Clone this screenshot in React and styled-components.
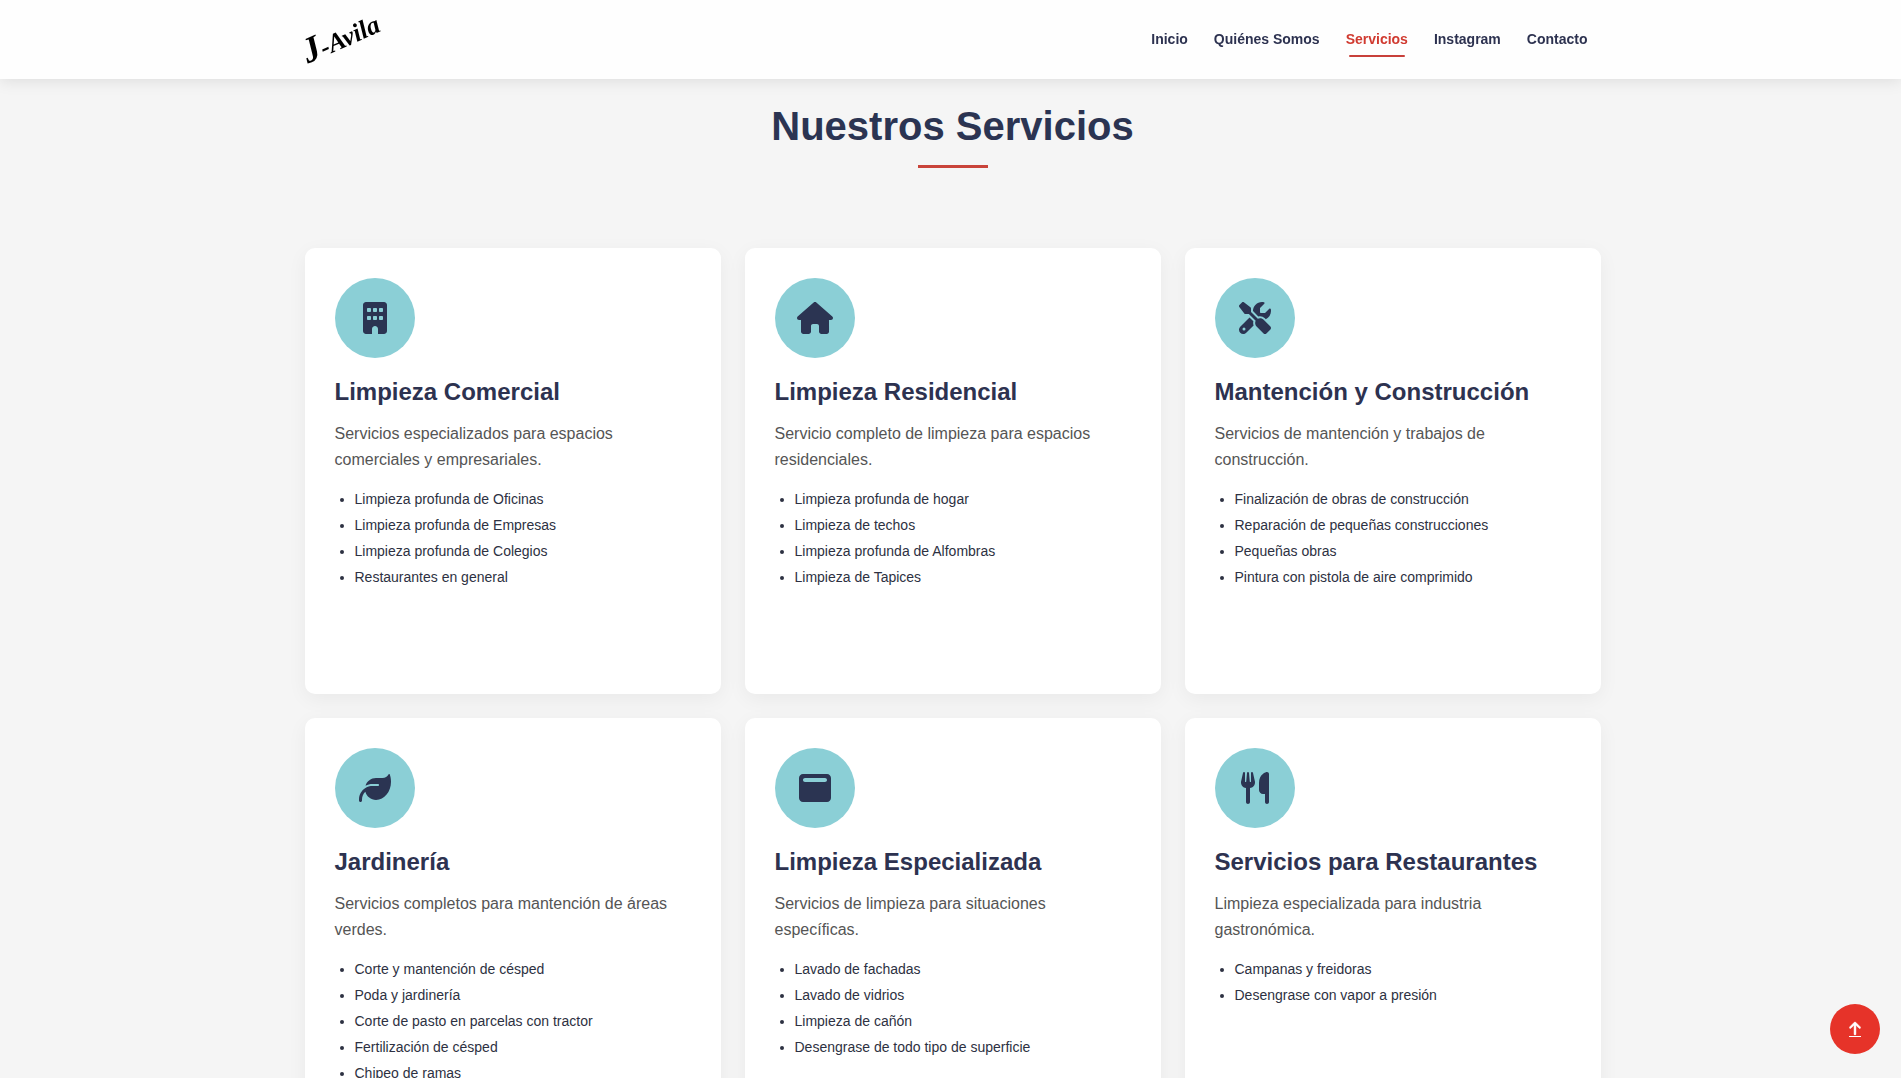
import React from "react";
import styled, { createGlobalStyle } from "styled-components";
import {
  FaArrowUp,
  FaBuilding,
  FaHouse,
  FaLeaf,
  FaScrewdriverWrench,
  FaUtensils,
  FaWindowMaximize,
} from "react-icons/fa6";

const GlobalStyle = createGlobalStyle`
  *, *::before, *::after { box-sizing: border-box; }
  body {
    margin: 0;
    background: #f5f5f5;
    color: #2d3250;
    font-family: "Liberation Sans", Arial, sans-serif;
  }
`;

const Page = styled.div`
  height: 100vh;
  overflow-y: auto;
  scrollbar-width: none;
`;

const Container = styled.div`
  max-width: 1296px;
  margin: 0 auto;
`;

const Header = styled.header`
  position: sticky;
  top: 0;
  z-index: 2;
  padding-left: 4px;
  background: #fefefe;
  box-shadow: 0 2px 15px rgba(0, 0, 0, 0.1);
`;

const Bar = styled(Container)`
  display: flex;
  align-items: center;
  justify-content: space-between;
  height: 79px;
`;

const Logo = styled.a`
  margin-left: -4px;
  padding-bottom: 4px;
  color: #000;
  font: italic bold 26px/40px "Liberation Serif", serif;
  text-decoration: none;
  transform: rotate(-24deg);
`;

const Initial = styled.span`
  font-size: 36px;
`;

const Nav = styled.nav`
  display: flex;
`;

const NavLink = styled.a`
  padding: 14px 13px 8px;
  font-size: 14px;
  font-weight: bold;
  line-height: 22px;
  text-decoration: none;
  color: ${(p) => (p.$active ? "#d03a30" : "#2d3250")};

  &::after {
    content: "";
    display: block;
    height: 2px;
    margin: 5px 3px 0;
    border-radius: 1px;
    background: ${(p) => (p.$active ? "#c8403a" : "transparent")};
  }
`;

const Services = styled.main`
  padding: 23px 0 80px 4px;
`;

const Heading = styled.h1`
  margin: 0 0 80px;
  color: #2b3452;
  font-size: 40px;
  line-height: 48px;
  text-align: center;

  &::after {
    content: "";
    display: block;
    width: 70px;
    height: 3px;
    margin: 15px auto 0;
    background: #c9443a;
  }
`;

const Grid = styled.div`
  display: grid;
  grid-template-columns: repeat(auto-fit, minmax(340px, 1fr));
  gap: 24px;
`;

const Card = styled.article`
  min-height: 446px;
  padding: 30px;
  border-radius: 10px;
  background: #fff;
  box-shadow: 0 5px 20px rgba(0, 0, 0, 0.05);
`;

const IconCircle = styled.div`
  display: flex;
  align-items: center;
  justify-content: center;
  width: 80px;
  height: 80px;
  border-radius: 50%;
  background: #8bcfd6;
  color: #2b3452;

  svg {
    width: 36px;
    height: 32px;
  }
`;

const Title = styled.h2`
  margin: 20px 0 15px;
  font-size: 24px;
  line-height: 28px;
`;

const Description = styled.p`
  margin: 0 0 13px;
  color: #555;
  font-size: 16px;
  line-height: 26px;
`;

const List = styled.ul`
  margin: 0;
  padding-left: 20px;
  color: #2d3142;
  font-size: 14px;
  line-height: 26px;
`;

const ScrollTop = styled.button`
  position: fixed;
  right: 21px;
  bottom: 24px;
  display: flex;
  align-items: center;
  justify-content: center;
  width: 50px;
  height: 50px;
  padding: 0;
  border: 0;
  border-radius: 50%;
  background: #e63329;
  color: #fff;
  cursor: pointer;
`;

const UnderlinedArrow = styled.span`
  display: flex;
  border-bottom: 1px solid currentColor;

  svg {
    width: 12px;
    height: 15px;
    stroke: currentColor;
    stroke-width: 16px;
  }
`;

const links = ["Inicio", "Quiénes Somos", "Servicios", "Instagram", "Contacto"];

const services = [
  {
    icon: FaBuilding,
    title: "Limpieza Comercial",
    text: "Servicios especializados para espacios comerciales y empresariales.",
    items: [
      "Limpieza profunda de Oficinas",
      "Limpieza profunda de Empresas",
      "Limpieza profunda de Colegios",
      "Restaurantes en general",
    ],
  },
  {
    icon: FaHouse,
    title: "Limpieza Residencial",
    text: "Servicio completo de limpieza para espacios residenciales.",
    items: [
      "Limpieza profunda de hogar",
      "Limpieza de techos",
      "Limpieza profunda de Alfombras",
      "Limpieza de Tapices",
    ],
  },
  {
    icon: FaScrewdriverWrench,
    title: "Mantención y Construcción",
    text: "Servicios de mantención y trabajos de construcción.",
    items: [
      "Finalización de obras de construcción",
      "Reparación de pequeñas construcciones",
      "Pequeñas obras",
      "Pintura con pistola de aire comprimido",
    ],
  },
  {
    icon: FaLeaf,
    title: "Jardinería",
    text: "Servicios completos para mantención de áreas verdes.",
    items: [
      "Corte y mantención de césped",
      "Poda y jardinería",
      "Corte de pasto en parcelas con tractor",
      "Fertilización de césped",
      "Chipeo de ramas",
    ],
  },
  {
    icon: FaWindowMaximize,
    title: "Limpieza Especializada",
    text: "Servicios de limpieza para situaciones específicas.",
    items: [
      "Lavado de fachadas",
      "Lavado de vidrios",
      "Limpieza de cañón",
      "Desengrase de todo tipo de superficie",
    ],
  },
  {
    icon: FaUtensils,
    title: "Servicios para Restaurantes",
    text: "Limpieza especializada para industria gastronómica.",
    items: ["Campanas y freidoras", "Desengrase con vapor a presión"],
  },
];

export default function App() {
  return (
    <>
      <GlobalStyle />
      <Page>
        <Header>
          <Bar>
            <Logo href="#inicio">
              <Initial>J</Initial>-Avila
            </Logo>
            <Nav>
              {links.map((label) => (
                <NavLink key={label} href="#servicios" $active={label === "Servicios"}>
                  {label}
                </NavLink>
              ))}
            </Nav>
          </Bar>
        </Header>
        <Services id="servicios">
          <Container>
            <Heading>Nuestros Servicios</Heading>
            <Grid>
              {services.map(({ icon: Icon, title, text, items }) => (
                <Card key={title}>
                  <IconCircle>
                    <Icon aria-hidden="true" />
                  </IconCircle>
                  <Title>{title}</Title>
                  <Description>{text}</Description>
                  <List>
                    {items.map((item) => (
                      <li key={item}>{item}</li>
                    ))}
                  </List>
                </Card>
              ))}
            </Grid>
          </Container>
        </Services>
        <ScrollTop type="button" aria-label="Volver arriba">
          <UnderlinedArrow>
            <FaArrowUp aria-hidden="true" />
          </UnderlinedArrow>
        </ScrollTop>
      </Page>
    </>
  );
}
